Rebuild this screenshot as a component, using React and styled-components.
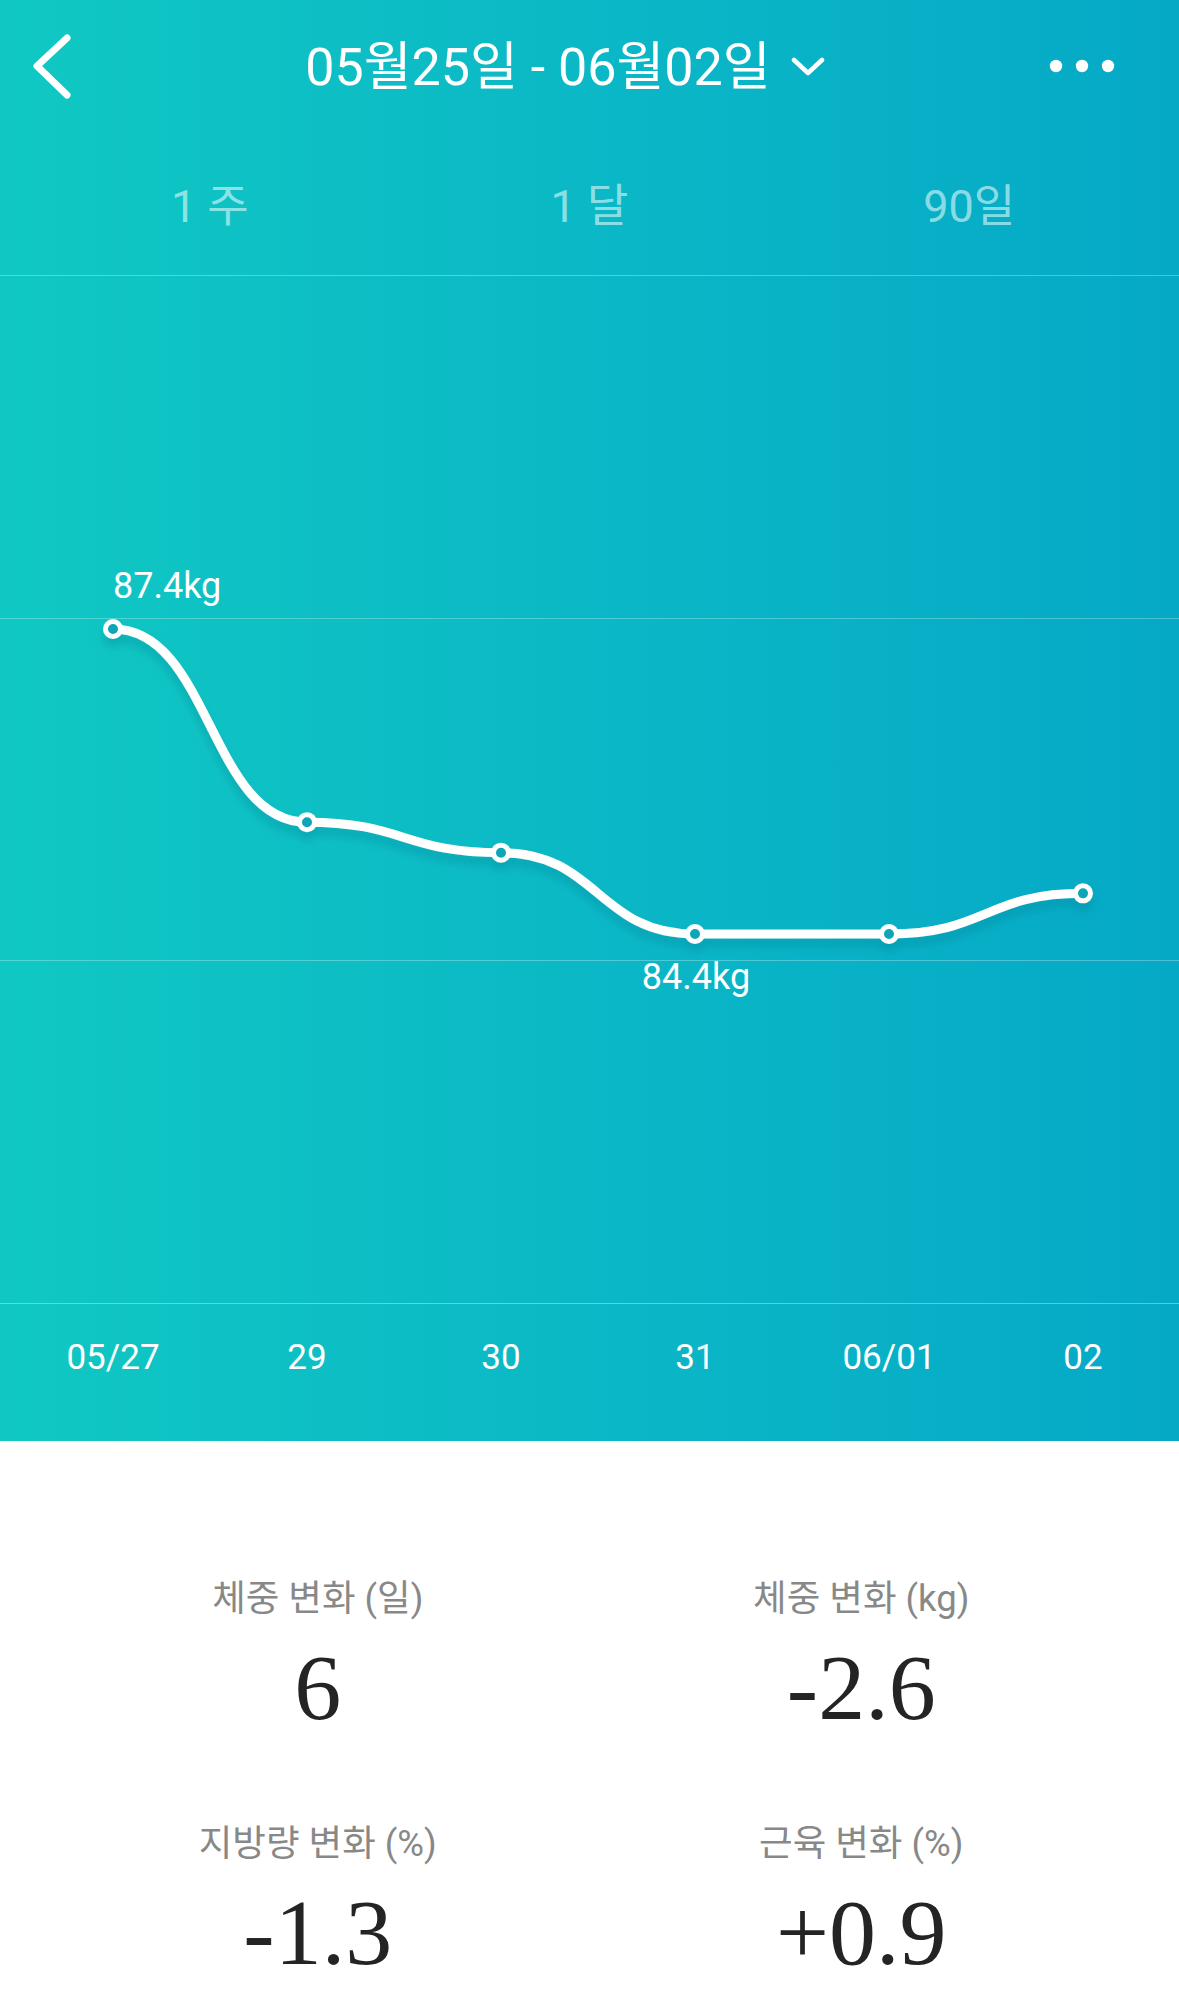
import React from 'react';
import styled, { createGlobalStyle } from 'styled-components';

const GlobalStyle = createGlobalStyle`
  html, body { margin: 0; padding: 0; background: #ffffff; }
  body { font-family: Roboto, "Noto Sans CJK KR", sans-serif; }
  * { box-sizing: border-box; }
`;

const Page = styled.div`
  width: 1179px;
  min-height: 1999px;
  background: #ffffff;
`;

const Hero = styled.section`
  display: flex;
  flex-direction: column;
  color: #ffffff;
  background: linear-gradient(90deg, #10c8c3 0%, #0bb8c6 50%, #05a9c6 100%);
`;

const Header = styled.header`
  height: 132px;
  display: flex;
  align-items: center;
`;

const IconButton = styled.button`
  width: ${(p) => p.$w}px;
  height: 132px;
  border: 0;
  background: transparent;
  padding: 0 0 0 ${(p) => p.$pl}px;
  display: flex;
  align-items: center;
  justify-content: flex-start;
  cursor: pointer;
`;

const TitleArea = styled.div`
  flex: 1;
  display: flex;
  justify-content: center;
  align-items: center;
  gap: 19px;
`;

const Title = styled.h1`
  margin: 0;
  font-family: Roboto, "Noto Sans CJK KR", sans-serif;
  font-weight: 400;
  font-size: 52px;
  line-height: 60px;
  padding-top: 4px;
  color: #ffffff;
  white-space: nowrap;
`;

const Tabs = styled.nav`
  height: 144px;
  display: grid;
  grid-template-columns: repeat(3, 1fr);
  align-items: center;
  padding: 6px 20px 0;
  border-bottom: 1px solid rgba(255, 255, 255, 0.3);
`;

const Tab = styled.span`
  text-align: center;
  font-size: 45px;
  line-height: 50px;
  color: ${(p) => (p.$active ? '#ffffff' : 'rgba(225, 250, 250, 0.62)')};
`;

const ChartArea = styled.div`
  height: 1028px;
  border-bottom: 1px solid rgba(255, 255, 255, 0.35);
`;

const ChartSvg = styled.svg`
  display: block;
  width: 1179px;
  height: 1027px;
`;

const Axis = styled.div`
  height: 137px;
  display: grid;
  grid-template-columns: repeat(6, 194px);
  padding: 34px 0 0 16px;
`;

const AxisLabel = styled.span`
  text-align: center;
  font-size: 35px;
  line-height: 40px;
  color: #ffffff;
`;

const Stats = styled.section`
  display: grid;
  grid-template-columns: 1fr 1fr;
  row-gap: 84px;
  padding: 137px 46px 0;
`;

const Stat = styled.div`
  display: flex;
  flex-direction: column;
  align-items: center;
`;

const StatLabel = styled.span`
  font-family: Roboto, "Noto Sans CJK KR", sans-serif;
  font-size: 36.5px;
  line-height: 42px;
  color: #888888;
  white-space: nowrap;
`;

const StatValue = styled.span`
  margin-top: 15px;
  font-family: "Liberation Serif", "Times New Roman", serif;
  font-size: 94px;
  line-height: 104px;
  color: #242424;
`;

const data = [
  { label: '05/27', v: 87.4 },
  { label: '29', v: 85.5 },
  { label: '30', v: 85.2 },
  { label: '31', v: 84.4 },
  { label: '06/01', v: 84.4 },
  { label: '02', v: 84.8 },
];

const pts = data.map((d, i) => ({
  x: 113 + i * 194,
  y: 353 + (87.4 - d.v) * 101.67,
}));

function smoothPath(points, k = 0.5) {
  let d = `M ${points[0].x} ${points[0].y}`;
  for (let i = 1; i < points.length; i++) {
    const a = points[i - 1];
    const b = points[i];
    const dx = b.x - a.x;
    d += ` C ${a.x + dx * k} ${a.y}, ${b.x - dx * k} ${b.y}, ${b.x} ${b.y}`;
  }
  return d;
}

const BackIcon = () => (
  <svg width="44" height="70" viewBox="30 31 44 70">
    <polyline
      points="67,38 37,66 67,95"
      fill="none"
      stroke="#ffffff"
      strokeWidth="7"
      strokeLinecap="round"
      strokeLinejoin="round"
    />
  </svg>
);

const ChevronDown = () => (
  <svg width="36" height="20" viewBox="0 0 36 20">
    <polyline
      points="4,4 18,17 32,4"
      fill="none"
      stroke="#ffffff"
      strokeWidth="4.5"
      strokeLinecap="round"
      strokeLinejoin="round"
    />
  </svg>
);

const MoreIcon = () => (
  <svg width="66" height="14" viewBox="0 0 66 14">
    <circle cx="7" cy="7" r="6.2" fill="#ffffff" />
    <circle cx="33" cy="7" r="6.2" fill="#ffffff" />
    <circle cx="59" cy="7" r="6.2" fill="#ffffff" />
  </svg>
);

const stats = [
  { label: '체중 변화 (일)', value: '6' },
  { label: '체중 변화 (kg)', value: '-2.6' },
  { label: '지방량 변화 (%)', value: '-1.3' },
  { label: '근육 변화 (%)', value: '+0.9' },
];

export default function App() {
  const path = smoothPath(pts);
  return (
    <Page>
      <GlobalStyle />
      <Hero>
        <Header>
          <IconButton $w={130} $pl={30} aria-label="back">
            <BackIcon />
          </IconButton>
          <TitleArea>
            <Title>05월25일 - 06월02일</Title>
            <ChevronDown />
          </TitleArea>
          <IconButton $w={178} $pl={48} aria-label="more">
            <MoreIcon />
          </IconButton>
        </Header>
        <Tabs>
          <Tab>1 주</Tab>
          <Tab>1 달</Tab>
          <Tab>90일</Tab>
        </Tabs>
        <ChartArea>
          <ChartSvg viewBox="0 0 1179 1027">
            <defs>
              <filter id="lineShadow" x="-10%" y="-10%" width="120%" height="140%">
                <feDropShadow dx="0" dy="8" stdDeviation="5" floodColor="#007c92" floodOpacity="0.35" />
              </filter>
            </defs>
            <line x1="0" y1="342.5" x2="1179" y2="342.5" stroke="rgba(255,255,255,0.28)" strokeWidth="1" />
            <line x1="0" y1="684.5" x2="1179" y2="684.5" stroke="rgba(255,255,255,0.28)" strokeWidth="1" />
            <g filter="url(#lineShadow)">
              <path d={path} fill="none" stroke="#ffffff" strokeWidth="9" strokeLinecap="round" />
              {pts.map((p, i) => (
                <circle key={i} cx={p.x} cy={p.y} r="7.5" fill="#0aa6b8" stroke="#ffffff" strokeWidth="5" />
              ))}
            </g>
            <text x="113" y="322" fill="#ffffff" fontSize="36" fontFamily="Roboto, sans-serif">
              87.4kg
            </text>
            <text x="696" y="713" fill="#ffffff" fontSize="36" fontFamily="Roboto, sans-serif" textAnchor="middle">
              84.4kg
            </text>
          </ChartSvg>
        </ChartArea>
        <Axis>
          {data.map((d) => (
            <AxisLabel key={d.label}>{d.label}</AxisLabel>
          ))}
        </Axis>
      </Hero>
      <Stats>
        {stats.map((s) => (
          <Stat key={s.label}>
            <StatLabel>{s.label}</StatLabel>
            <StatValue>{s.value}</StatValue>
          </Stat>
        ))}
      </Stats>
    </Page>
  );
}
